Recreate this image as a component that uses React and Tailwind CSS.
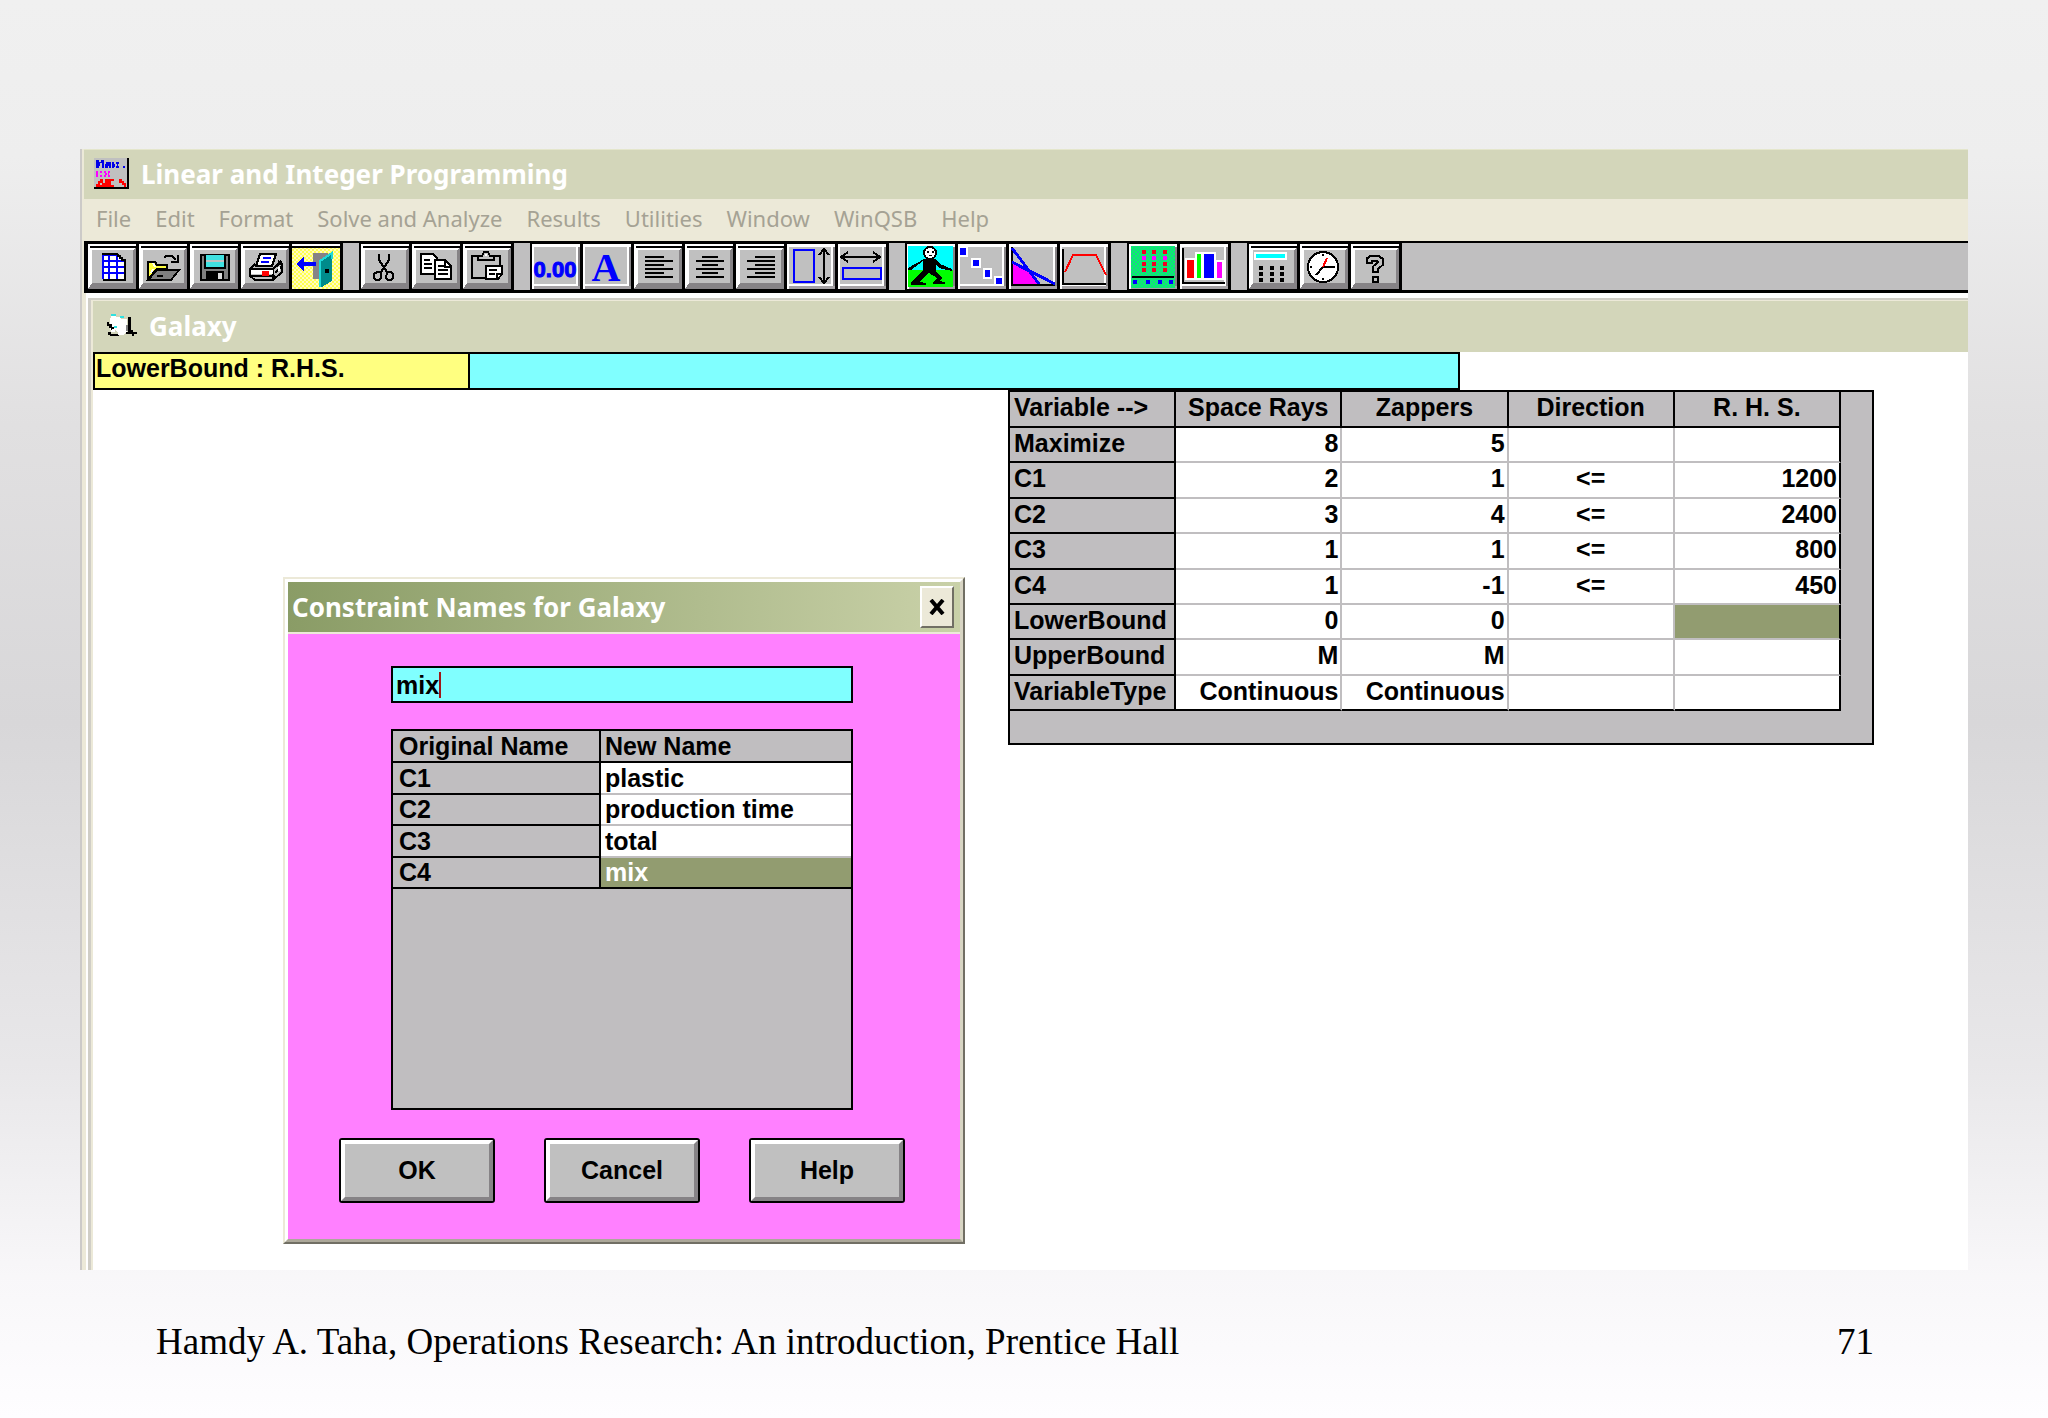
import React, { useState } from "react";

const UI = "font-['Liberation_Sans',sans-serif] font-bold text-[25px]";
const CAPTION = "font-['Noto_Sans',sans-serif] font-bold text-[26px] leading-8";

/* ---------- toolbar icons: each is drawn on a 48 x 47 button face ---------- */

function Face({ children, flat, fill = "#c0c0c0" }) {
  return (
    <svg viewBox="0 0 48 47" className="block h-[47px] w-12" shapeRendering="crispEdges" aria-hidden="true">
      <rect width="48" height="47" fill="#000" />
      {flat ? (
        <>
          <rect x="0" y="1" width="48" height="45" fill="#fff" />
          <rect x="46" y="4" width="2" height="42" fill="#868386" />
          <rect x="2" y="43" width="46" height="3" fill="#a5a2a5" />
          <rect x="2" y="4" width="42" height="37" fill={fill} />
        </>
      ) : (
        <>
          <rect x="0" y="1" width="48" height="45" fill="#fff" />
          <path d="M0 46L4 40H45V7L48 5V46z" fill="#868386" />
          <rect x="2" y="3" width="46" height="2" fill="#000" />
          <rect x="4" y="7" width="41" height="33" fill={fill} />
        </>
      )}
      {children}
    </svg>
  );
}

const Px = ({ children }) => (
  <g transform="scale(2)" fill="none" stroke="#000" strokeWidth="1">
    {children}
  </g>
);

const GridIcon = () => (
  <Face>
    <Px>
      <path d="M7 5.500h8l3 3v9.500h-11z" fill="#fff" stroke="none" />
      <path d="M10.500 6v12M14.500 6v12M7 9h11M7 12h11M7 15h11M7.500 6v12M7 6h8" stroke="#00f" />
      <path d="M7 5.500h8M15 5.500v1h1v1h1v1h1.500v10H7.500" />
    </Px>
  </Face>
);

const OpenIcon = () => (
  <Face>
    <Px>
      <path d="M4.500 18V9.500H8l1 1.500h5v2H9z" fill="#ffff40" />
      <path d="M7 10l1 2M6 15l1-2" stroke="#fff" />
      <path d="M4.500 18.500L9 13.500h11l-4 5z" fill="#808080" />
      <path d="M9 16.500h3" />
      <path d="M12.500 7.500l1-1h3l2 2M19.500 6v3.500H16" />
    </Px>
  </Face>
);

const SaveIcon = () => (
  <Face>
    <Px>
      <rect x="5.500" y="6" width="14" height="12.500" fill="#808080" />
      <rect x="8" y="6" width="9" height="6" fill="#40e0e0" stroke="none" />
      <path d="M8 9h9" stroke="#c0c0c0" />
      <path d="M7.500 6v6.500h10V6" />
      <rect x="8" y="14" width="9" height="5" fill="#000" stroke="none" />
      <rect x="14" y="15" width="2" height="3" fill="#dcdcdc" stroke="none" />
    </Px>
  </Face>
);

const PrintIcon = () => (
  <Face>
    <Px>
      <path d="M9.500 5.500h8l-2 6h-8z" fill="#fff" />
      <path d="M11 7.500h4M10 9.500h4" stroke="#00f" />
      <path d="M7 10.500L4.500 13v3.500L7 18.500h9l4.500-4v-4l-2-1.500M4.500 13H16l4-4M16 13v5" />
      <rect x="5" y="13.500" width="11" height="2" fill="#fff" stroke="none" />
      <path d="M5 16.500h12M17 12l3-2M17 15l3-3" />
      <rect x="10.500" y="14" width="3.500" height="2.500" fill="#f00" stroke="none" />
      <path d="M19 12v2" stroke="#fff" />
    </Px>
  </Face>
);

const ExitIcon = () => (
  <Face flat fill="#ffff60">
    <defs>
      <pattern id="dither-yellow" width="4" height="4" patternUnits="userSpaceOnUse">
        <rect width="4" height="4" fill="#ffff50" />
        <rect width="2" height="2" fill="#fffbc0" />
        <rect x="2" y="2" width="2" height="2" fill="#fffbc0" />
      </pattern>
    </defs>
    <rect x="0" y="4" width="48" height="42" fill="url(#dither-yellow)" />
    <rect x="0" y="3" width="48" height="2" fill="#000" />
    <Px>
      <rect x="10.500" y="5" width="7.500" height="13" fill="#868386" stroke="none" />
      <path d="M14 9l6-4.500V19l-5 3h-1z" fill="#008b8b" stroke="none" />
      <path d="M14 22V9l6-4v3" stroke="#20d8d8" />
      <rect x="16.500" y="13" width="2" height="2" fill="#000" stroke="none" />
      <path d="M2 10.500l4-3.500v2.500h6v2H6V14z" fill="#00f" stroke="none" />
    </Px>
  </Face>
);

const CutIcon = () => (
  <Face>
    <Px>
      <path d="M9 5.500v3l4 6M14 5.500v3l-4 6" />
      <path d="M8 14.500h2v3l-1 1H7.500l-1-1v-2zM13 14.500h2l1 1v2l-1 1h-1.500l-1-1z" />
    </Px>
  </Face>
);

const CopyIcon = () => (
  <Face>
    <Px>
      <path d="M4.500 5.500h6l2 2v8h-8z" fill="#fff" />
      <path d="M6 8.500h3M6 10.500h4M6 12.500h4" />
      <path d="M11.500 8.500h5l3 3v6.500h-8z" fill="#fff" />
      <path d="M13 11.500h3M13 13.500h5M13 15.500h5M16.500 9v3H19" />
    </Px>
  </Face>
);

const PasteIcon = () => (
  <Face>
    <Px>
      <path d="M8 6.500H4.500v11H12M15 6.500h3.500V11" />
      <path d="M7.500 8.500v-2h2l1-2h2l1 2h2v2z" fill="#c0c0c0" />
      <rect x="11" y="5.500" width="1" height="1" fill="#fff" stroke="none" />
      <path d="M11.500 11.500h8v4l-2 2.500h-6z" fill="#fff" />
      <path d="M13 13.500h4M13 15.500h3M19 15.500h-2V18" />
    </Px>
  </Face>
);

const DecimalIcon = () => (
  <Face flat>
    <text
      x="23"
      y="34"
      textAnchor="middle"
      fill="#00f"
      stroke="#00f"
      strokeWidth="1"
      className="font-['Liberation_Sans',sans-serif] text-[22px] font-bold"
    >
      0.00
    </text>
  </Face>
);

const FontIcon = () => (
  <Face flat>
    <text x="23" y="38" textAnchor="middle" fill="#00f" className="font-['Liberation_Serif',serif] text-[40px] font-bold">
      A
    </text>
  </Face>
);

const LeftIcon = () => (
  <Face>
    <path d="M11 14h19M11 18h28M11 22h19M11 26h28M11 30h19M11 34h28" stroke="#000" strokeWidth="2" />
  </Face>
);
const CenterIcon = () => (
  <Face>
    <path d="M17 14h16M11 18h28M17 22h16M11 26h28M17 30h16M11 34h28" stroke="#000" strokeWidth="2" />
  </Face>
);
const RightIcon = () => (
  <Face>
    <path d="M19 14h20M11 18h28M19 22h20M11 26h28M19 30h20M11 34h28" stroke="#000" strokeWidth="2" />
  </Face>
);

const RowHeightIcon = () => (
  <Face flat>
    <rect x="7" y="7" width="20" height="32" fill="none" stroke="#00f" strokeWidth="2" />
    <path d="M37 6v34M32 12l5-6 5 6M32 34l5 6 5-6" fill="none" stroke="#000" strokeWidth="2" />
  </Face>
);
const ColumnWidthIcon = () => (
  <Face flat>
    <rect x="5" y="25" width="38" height="11" fill="none" stroke="#00f" strokeWidth="2" />
    <path d="M3 14h39M10 9l-7 5 7 5M35 9l7 5-7 5" fill="none" stroke="#000" strokeWidth="2" />
  </Face>
);

const RunnerIcon = () => (
  <Face flat>
    <rect x="1" y="3" width="45" height="24" fill="#0ff" />
    <rect x="1" y="27" width="45" height="17" fill="#0f0" />
    <path d="M17 16h12l4 5 12 5v2l-13-3-3-3v7l6 6-3 3 6 1v2H26v-2l4-4-8-5-6 5-4 4 7 1v2H4v-2l12-13v-9L4 27H1v-2z" fill="#000" />
    <circle cx="23" cy="10" r="6" fill="#fff" stroke="#000" strokeWidth="2" />
    <path d="M20 8h2v2h-2zM25 8h2v2h-2zM22 12h3v1h-3z" fill="#000" />
  </Face>
);

const StepsIcon = () => (
  <Face flat>
    <g fill="#00f" stroke="#fff" strokeWidth="2">
      <rect x="1" y="4" width="8" height="9" />
      <rect x="14" y="16" width="8" height="8" />
      <rect x="26" y="26" width="7" height="9" />
      <rect x="37" y="34" width="8" height="8" />
    </g>
  </Face>
);

const RegionIcon = () => (
  <Face flat>
    <path d="M3 19L18 27 29 41H3z" fill="#f0f" />
    <path d="M3 4v38h43" fill="none" stroke="#000" strokeWidth="2" />
    <path d="M3 5l27 36M3 19l43 22" fill="none" stroke="#00f" strokeWidth="3" />
  </Face>
);

const ParametricIcon = () => (
  <Face flat>
    <path d="M3 6v35h43" fill="none" stroke="#000" strokeWidth="2" />
    <path d="M5 29l8-17h23l10 20" fill="none" stroke="#f00" strokeWidth="2" />
  </Face>
);

const MatrixIcon = () => (
  <Face flat>
    <defs>
      <pattern id="dither-green" width="4" height="4" patternUnits="userSpaceOnUse">
        <rect width="4" height="4" fill="#00ff60" />
        <rect width="2" height="2" fill="#20c890" />
        <rect x="2" y="2" width="2" height="2" fill="#20c890" />
      </pattern>
    </defs>
    <rect x="2" y="3" width="44" height="42" fill="url(#dither-green)" />
    {[13, 23, 34].map((x) =>
      [7, 13, 19, 25].map((y) => (
        <rect key={`${x}-${y}`} x={x} y={y} width="4" height="4" fill={y === 13 ? "#f0f" : "#f00020"} />
      ))
    )}
    <path d="M3 34h42" stroke="#000" strokeWidth="2" />
    {[4, 17, 29, 40].map((x) => (
      <rect key={x} x={x} y="37" width="4" height="4" fill="#00f" />
    ))}
  </Face>
);

const BarsIcon = () => (
  <Face flat>
    <g stroke="#fff" strokeWidth="2">
      <rect x="6" y="16" width="9" height="20" fill="#f00" />
      <rect x="16" y="10" width="6" height="26" fill="#0f0" />
      <rect x="23" y="10" width="12" height="26" fill="#00f" />
      <rect x="36" y="18" width="7" height="18" fill="#f0f" />
    </g>
    <path d="M3 5v35h42" fill="none" stroke="#000" strokeWidth="2" />
  </Face>
);

const CalculatorIcon = () => (
  <Face>
    <rect x="6" y="10" width="31" height="6" fill="#0ff" stroke="#fff" strokeWidth="2" />
    {[10, 21, 31].map((x) => [23, 29, 35].map((y) => <rect key={`${x}-${y}`} x={x} y={y} width="4" height="4" fill="#000" />))}
  </Face>
);

const ClockIcon = () => (
  <Face>
    <circle cx="23" cy="24" r="15" fill="#fff" stroke="#000" strokeWidth="2" />
    <path d="M23 24h12M23 24l-7 8" stroke="#000" strokeWidth="2" />
    <path d="M23 24l4-9" stroke="#f00" strokeWidth="2" />
    <path d="M22 11h2v2h-2zM22 35h2v2h-2zM10 23h2v2h-2z" fill="#000" />
  </Face>
);

const HelpIcon = () => (
  <Face>
    <g fill="none" stroke="#000" strokeWidth="7">
      <path d="M18 21v-4l3-2h5l3 2v4l-5 4v5" />
      <path d="M21 36h7" />
    </g>
    <g fill="none" stroke="#c0c0c0" strokeWidth="3">
      <path d="M18 19v-2l3-2h5l3 2v4l-5 4v3" />
      <path d="M23 36h3" />
    </g>
  </Face>
);

const toolGroups = [
  [
    ["New problem", GridIcon],
    ["Open", OpenIcon],
    ["Save", SaveIcon],
    ["Print", PrintIcon],
    ["Exit", ExitIcon],
  ],
  [
    ["Cut", CutIcon],
    ["Copy", CopyIcon],
    ["Paste", PasteIcon],
  ],
  [
    ["Number format", DecimalIcon],
    ["Font", FontIcon],
    ["Align left", LeftIcon],
    ["Align center", CenterIcon],
    ["Align right", RightIcon],
    ["Row height", RowHeightIcon],
    ["Column width", ColumnWidthIcon],
  ],
  [
    ["Solve", RunnerIcon],
    ["Solve with steps", StepsIcon],
    ["Graphic method", RegionIcon],
    ["Parametric analysis", ParametricIcon],
  ],
  [
    ["Matrix form", MatrixIcon],
    ["Chart", BarsIcon],
  ],
  [
    ["Calculator", CalculatorIcon],
    ["Clock", ClockIcon],
    ["Help contents", HelpIcon],
  ],
];

const menus = ["File", "Edit", "Format", "Solve and Analyze", "Results", "Utilities", "Window", "WinQSB", "Help"];

/* ---------- title bar icons ---------- */

const AppIcon = () => (
  <svg viewBox="0 0 35 31" className="h-[31px] w-[35px]" shapeRendering="crispEdges" aria-hidden="true">
    <rect width="35" height="31" fill="#000" />
    <rect width="33" height="29" fill="#c0c0c0" />
    <path
      d="M2 2h3v2h2V2h3v8H8V5H6v3H5v2H2zM12 4h5v6h-2V8h-1v2h-3V6h1zM18 4h2v2h1v3h-1v1h-2zM22 4h3v2h-1v2h1v2h-3V8h1V6h-1zM29 8h2v2h-2z"
      fill="#0000e8"
    />
    <path d="M2 13h2v6H2zM6 13h2v2H6zM6 17h2v2H6zM10 13h2v2h1v2h-1v2h-2v-2h1v-2h-1zM14 13h2v2h-1v2h1v2h-2z" fill="#f0f" />
    <path d="M2 29v-3h2v-3h2v-2h3v4h2v-4h9v2h-3v4h3v2zM25 21h3v2h2v2h2v4h-2v-2h-2v-2h-3z" fill="#f00" />
    <path d="M6 25h2v2H6z" fill="#c0c0c0" />
  </svg>
);

const SheetIcon = () => (
  <svg viewBox="0 0 30 24" className="h-6 w-[30px]" shapeRendering="crispEdges" aria-hidden="true">
    <path d="M4 2h5v1h5v2h6v12l-3 3h-5l-5-5-4 1V7z" fill="#fff" />
    <path d="M4 0h5v2H4zM13 2h4v2h-4zM7 12h3v2H7z" fill="#30e0e0" />
    <path d="M0 8h2v2h3v3h2v3H4v-2H2v-2H0zM1 18h3v2h8v2H3v-1H1z" fill="#000" />
    <path d="M5 15h3v3H4zM11 18h6v3h-6z" fill="#fff" />
    <path d="M21 3h3v13h2v2h4v2h-3v2h-2v-2h-6v-2h2z" fill="#000" />
    <path d="M19 11h2v6h-2z" fill="#808080" />
  </svg>
);

/* ---------- problem matrix ---------- */

const headings = ["Variable -->", "Space Rays", "Zappers", "Direction", "R. H. S."];
const rows = [
  ["Maximize", "8", "5", "", ""],
  ["C1", "2", "1", "<=", "1200"],
  ["C2", "3", "4", "<=", "2400"],
  ["C3", "1", "1", "<=", "800"],
  ["C4", "1", "-1", "<=", "450"],
  ["LowerBound", "0", "0", "", ""],
  ["UpperBound", "M", "M", "", ""],
  ["VariableType", "Continuous", "Continuous", "", ""],
];

function Matrix() {
  return (
    <div className="w-[866px] border-2 border-black bg-[#c0bec0] pr-[31px] pb-8">
      <table className={`${UI} h-[319px] w-full table-fixed border-separate border-spacing-0 leading-[30px] whitespace-nowrap`}>
        <thead>
          <tr className="h-9">
            {headings.map((h, i) => (
              <th key={h} scope="col" className={`border-r-2 border-b-2 border-black p-0 align-top ${i === 0 ? "pl-1 text-left" : "text-center"}`}>
                {h}
              </th>
            ))}
          </tr>
        </thead>
        <tbody>
          {rows.map((row, r) => (
            <tr key={row[0]}>
              <th scope="row" className="border-r-2 border-b-2 border-black p-0 pl-1 text-left align-top">
                {row[0]}
              </th>
              {row.slice(1).map((cell, c) => {
                const active = r === 5 && c === 3;
                return (
                  <td
                    key={c}
                    className={`border-r-2 border-b-2 p-0 align-top ${c === 2 ? "text-center" : "pr-0.5 text-right"} ${
                      c === 3 ? "border-r-black" : "border-r-[#c0bec0]"
                    } ${r === 7 ? "border-b-black" : "border-b-[#c0bec0]"} ${active ? "bg-[#929c70]" : "bg-white"}`}
                  >
                    {cell}
                  </td>
                );
              })}
            </tr>
          ))}
        </tbody>
      </table>
    </div>
  );
}

/* ---------- dialog ---------- */

const names = [
  ["C1", "plastic"],
  ["C2", "production time"],
  ["C3", "total"],
  ["C4", "mix"],
];

function DialogButton({ children }) {
  return (
    <button type="button" className={`${UI} h-[65px] w-[156px] rounded-[3px] border-2 border-black bg-black leading-none`}>
      <span className="flex h-full items-center justify-center border-4 border-t-white border-r-[#868386] border-b-[#868386] border-l-white bg-[#c0c0c0]">
        {children}
      </span>
    </button>
  );
}

function ConstraintDialog() {
  const [name, setName] = useState("mix");
  return (
    <section
      role="dialog"
      aria-label="Constraint Names for Galaxy"
      className="absolute top-[225px] left-[190px] flex h-[667px] w-[682px] flex-col border-2 border-t-[#ece9d8] border-r-[#716f64] border-b-[#716f64] border-l-[#ece9d8]"
    >
      <div className="flex flex-1 flex-col border-[3px] border-t-white border-r-[#d8d5c4] border-b-[#aca899] border-l-white">
        <header className="flex h-[50px] items-center justify-between bg-linear-to-r from-[#8a9c66] to-[#c9d1a8] pr-1.5 pl-1">
          <h2 className={`${CAPTION} text-white`}>Constraint Names for Galaxy</h2>
          <button
            type="button"
            aria-label="Close"
            className="flex h-[42px] w-[34px] items-center justify-center border-2 border-t-white border-r-[#716f64] border-b-[#716f64] border-l-white bg-[#ece9d8]"
          >
            <svg viewBox="0 0 18 16" className="h-4 w-[18px]" aria-hidden="true">
              <path d="M3 1l12 14M15 1L3 15" stroke="#000" strokeWidth="4" />
            </svg>
          </button>
        </header>
        <div className="flex flex-1 flex-col items-center border-t-2 border-[#ece9d8] bg-[#ff80ff] pt-8 pr-1">
          <label className={`${UI} flex h-[37px] w-[462px] cursor-text items-center border-2 border-black bg-[#80ffff] pl-[3px]`}>
            <input
              aria-label="New name"
              value={name}
              onChange={(e) => setName(e.target.value)}
              className="field-sizing-content h-7 bg-transparent p-0 leading-7 outline-none"
            />
            <span className="h-[26px] w-0.5 bg-[#a01818]" />
          </label>
          <div className="mt-[26px] h-[381px] w-[462px] border-2 border-black bg-[#c0bec0]">
            <table className={`${UI} h-[158px] w-full table-fixed border-separate border-spacing-0 leading-7 whitespace-nowrap`}>
              <thead>
                <tr className="h-8">
                  <th scope="col" className="w-[208px] border-r-2 border-b-2 border-black p-0 pl-1.5 text-left">
                    Original Name
                  </th>
                  <th scope="col" className="border-b-2 border-black p-0 pl-1 text-left">
                    New Name
                  </th>
                </tr>
              </thead>
              <tbody>
                {names.map(([from, to], i) => (
                  <tr key={from}>
                    <th scope="row" className="border-r-2 border-b-2 border-black p-0 pl-1.5 text-left">
                      {from}
                    </th>
                    <td
                      className={`border-b-2 p-0 pl-1 text-left ${
                        i === 3 ? "border-black bg-[#929c70] text-white" : "border-[#c0bec0] bg-white"
                      }`}
                    >
                      {to}
                    </td>
                  </tr>
                ))}
              </tbody>
            </table>
          </div>
          <div className="mt-7 flex gap-[49px]">
            <DialogButton>OK</DialogButton>
            <DialogButton>Cancel</DialogButton>
            <DialogButton>Help</DialogButton>
          </div>
        </div>
      </div>
    </section>
  );
}

/* ---------- page ---------- */

export default function App() {
  return (
    <div className="flex min-h-screen flex-col bg-[linear-gradient(to_bottom,#f0f0f0_0%,#eeeeee_11%,#e1e0e1_30%,#d8d7d9_51%,#e8e7e9_75%,#f8f7f9_90%,#fefdff_100%)] px-20 pt-[149px]">
      <main className="flex flex-1 flex-col border-l-2 border-[#cccac8] bg-[#ece9d8] pl-0.5">
        <header className="flex h-[50px] items-center gap-3 border-t border-[#e4e6cc] bg-[#d3d6ba] pb-0.5 pl-2.5">
          <AppIcon />
          <h1 className={`${CAPTION} text-white`}>Linear and Integer Programming</h1>
        </header>

        <nav className="flex h-[42px] items-center gap-6 pb-1 pl-3 font-['Noto_Sans',sans-serif] text-[22px] leading-7 text-[#a5a294]">
          {menus.map((m) => (
            <button key={m} type="button">
              {m}
            </button>
          ))}
        </nav>

        <div role="toolbar" aria-label="Tools" className="flex gap-4 border-t-2 border-b-[3px] border-black bg-[#c0bfc0]">
          {toolGroups.map((group, g) => (
            <div key={g} className={`flex border-black ${g === 0 ? "border-l-4" : "border-l-2"}`}>
              {group.map(([label, Icon]) => (
                <button key={label} type="button" aria-label={label} title={label} className="border-r-[3px] border-black">
                  <Icon />
                </button>
              ))}
            </div>
          ))}
        </div>

        <section className="flex flex-1 flex-col border-l-2 border-[#ece9d8] bg-white pt-[5px] pl-0.5">
          <div className="flex flex-1 flex-col border-t-2 border-l-[3px] border-[#d0cec6] bg-[#ece9d8] pt-px pl-0.5">
            <header className="flex h-[51px] items-center gap-3 bg-[#d3d6ba] pb-0.5 pl-3.5">
              <SheetIcon />
              <h2 className={`${CAPTION} text-white`}>Galaxy</h2>
            </header>
            <div className="relative flex-1 bg-white">
              <div className={`${UI} flex h-[38px] w-full max-w-[1367px] border-2 border-black bg-[#80ffff] leading-7`}>
                <div className="w-[375px] border-r-2 border-black bg-[#ffff80] pl-px">LowerBound : R.H.S.</div>
              </div>
              <div className="flex justify-end pr-[94px]">
                <Matrix />
              </div>
              <ConstraintDialog />
            </div>
          </div>
        </section>
      </main>

      <footer className="flex h-[148px] items-center justify-between pr-[94px] pb-1 pl-[76px] font-['Liberation_Serif',serif] text-[37px] leading-10 text-black">
        <p>Hamdy A. Taha, Operations Research: An introduction, Prentice Hall</p>
        <p>71</p>
      </footer>
    </div>
  );
}
